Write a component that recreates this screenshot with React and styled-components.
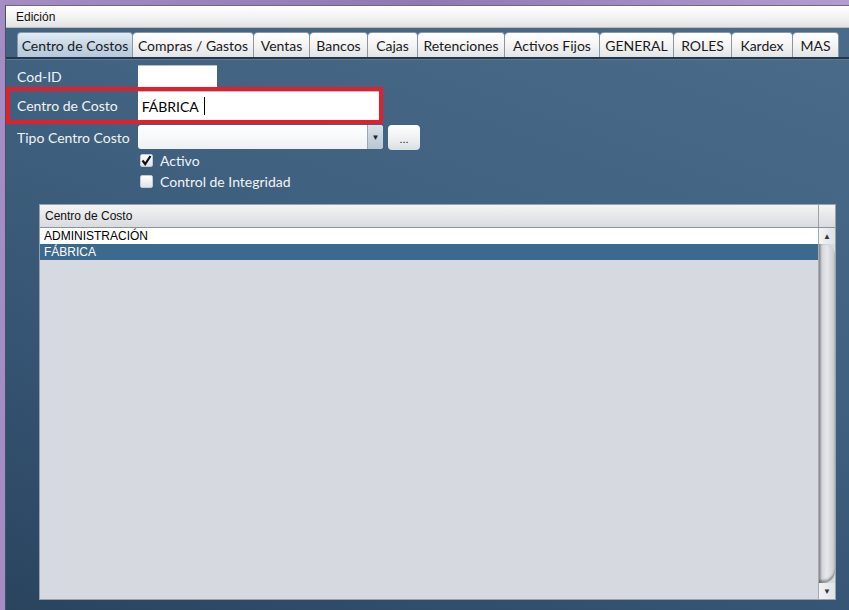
import React from 'react'
import styled, { createGlobalStyle } from 'styled-components'

const GlobalStyle = createGlobalStyle`
  html, body {
    margin: 0;
    padding: 0;
    background: #9c86bc;
    overflow: hidden;
  }
  * { box-sizing: border-box; }
`;

const tabs = [
  { label: 'Centro de Costos', w: 116, active: true },
  { label: 'Compras / Gastos', w: 121 },
  { label: 'Ventas', w: 56 },
  { label: 'Bancos', w: 58 },
  { label: 'Cajas', w: 50 },
  { label: 'Retenciones', w: 87 },
  { label: 'Activos Fijos', w: 95 },
  { label: 'GENERAL', w: 74 },
  { label: 'ROLES', w: 58 },
  { label: 'Kardex', w: 61 },
  { label: 'MAS', w: 46 },
];

const rows = [
  { name: 'ADMINISTRACIÓN' },
  { name: 'FÁBRICA', selected: true },
];

const uiFont = `"Lato", "DejaVu Sans", sans-serif`;

const Window = styled.div`
  width: 849px;
  height: 610px;
  padding: 5px 0 0 5px;
  background: linear-gradient(90deg, #a48cc4 0%, #8f78b4 50%, #b19dd0 100%);
  display: flex;
  flex-direction: column;
`;

const Frame = styled.div`
  flex: 1;
  display: flex;
  flex-direction: column;
  border-left: 1px solid #4b4f63;
  border-top: 1px solid #6d6887;
  overflow: hidden;
`;

const MenuBar = styled.div`
  height: 22px;
  background: linear-gradient(#ffffff, #f1f1f1 60%, #e2e2e2);
  border-bottom: 1px solid #b8bcc4;
  display: flex;
  align-items: center;
  padding-left: 10px;
  font-family: "Liberation Sans", Arial, sans-serif;
  font-size: 12px;
  color: #111;
`;

const Panel = styled.div`
  flex: 1;
  display: flex;
  flex-direction: column;
  background: linear-gradient(200deg, #4a6b8a 0%, #40617f 40%, #355473 70%, #2a445e 100%);
`;

const TabStrip = styled.div`
  height: 31px;
  display: flex;
  align-items: flex-end;
  padding-left: 11px;
  border-bottom: 2px solid #23384c;
  box-shadow: 0 1px 0 #5d7a94;
`;

const Tab = styled.div`
  width: ${p => p.$w}px;
  height: 25px;
  display: flex;
  align-items: center;
  justify-content: center;
  font-family: ${uiFont};
  font-size: 14px;
  color: #1a1a1a;
  white-space: nowrap;
  border: 1px solid #8a97a3;
  border-bottom: none;
  border-left: ${p => (p.$first ? '1px solid #8a97a3' : 'none')};
  border-radius: 4px 4px 0 0;
  background: ${p =>
    p.$active
      ? 'linear-gradient(#e3ecf4, #c4d5e4 55%, #b4c9dc)'
      : 'linear-gradient(#ffffff, #f4f4f4 50%, #e3e4e6)'};
`;

const Form = styled.div`
  padding: 5px 0 0 0;
  display: flex;
  flex-direction: column;
`;

const Row = styled.div`
  display: flex;
  align-items: center;
  height: ${p => p.$h || 23}px;
  padding-left: 11px;
`;

const Highlight = styled.div`
  display: flex;
  align-items: center;
  width: 377px;
  height: 37px;
  margin-top: -1px;
  border: 4px solid #e2202c;
  padding-left: 7px;
`;

const Label = styled.span`
  width: 121px;
  font-family: ${uiFont};
  font-size: 14px;
  color: #f1f4f7;
`;

const TextBox = styled.div`
  width: ${p => p.$w}px;
  height: ${p => p.$h || 23}px;
  background: #fff;
  border-top: 1px solid #b9c2cc;
  display: flex;
  align-items: center;
  padding-left: 4px;
  font-family: ${uiFont};
  font-size: 14px;
  color: #000;
`;

const Caret = styled.span`
  display: inline-block;
  width: 1px;
  height: 18px;
  background: #000;
  margin-left: 5px;
`;

const Combo = styled.div`
  width: 245px;
  height: 24px;
  display: flex;
  border-radius: 3px;
  overflow: hidden;
  background: linear-gradient(#ffffff, #eef1f4);
`;

const ComboField = styled.div`
  flex: 1;
`;

const ComboArrow = styled.div`
  width: 16px;
  display: flex;
  align-items: center;
  justify-content: center;
  background: linear-gradient(#d9e2ea, #b8c7d4);
  border-left: 1px solid #9aa8b5;
  font-size: 8px;
  color: #222;
`;

const DotsButton = styled.div`
  width: 32px;
  height: 25px;
  margin-left: 5px;
  border-radius: 4px;
  background: linear-gradient(#ffffff, #eceef0 60%, #dcdfe3);
  display: flex;
  align-items: flex-end;
  justify-content: center;
  padding-bottom: 5px;
  font-family: "Liberation Sans", Arial, sans-serif;
  font-size: 11px;
  color: #111;
  line-height: 1;
`;

const CheckRow = styled.div`
  display: flex;
  align-items: center;
  height: 21px;
  padding-left: 134px;
  font-family: ${uiFont};
  font-size: 14px;
  color: #f1f4f7;
`;

const Box = styled.span`
  width: 13px;
  height: 13px;
  border-radius: 2px;
  background: linear-gradient(#ffffff, #dfe3e8);
  border: 1px solid #c3cad2;
  margin-right: 7px;
  display: flex;
  align-items: center;
  justify-content: center;
`;

const Table = styled.div`
  margin: 12px 0 0 33px;
  width: 797px;
  height: 396px;
  display: flex;
  flex-direction: column;
  border: 1px solid #98a2ac;
  background: #d6d9e0;
  font-family: "Liberation Sans", Arial, sans-serif;
  font-size: 12px;
`;

const Header = styled.div`
  height: 23px;
  display: flex;
  background: linear-gradient(#f4f4f5, #e6e7ea 50%, #dadbdf);
  border-bottom: 1px solid #8d939a;
`;

const HeaderCell = styled.div`
  flex: 1;
  display: flex;
  align-items: center;
  padding-left: 5px;
  color: #111;
`;

const HeaderCorner = styled.div`
  width: 17px;
  border-left: 1px solid #9ba1a8;
`;

const Body = styled.div`
  flex: 1;
  display: flex;
`;

const Rows = styled.div`
  flex: 1;
  display: flex;
  flex-direction: column;
`;

const DataRow = styled.div`
  height: 16px;
  display: flex;
  align-items: center;
  padding-left: 4px;
  background: ${p => (p.$selected ? '#3b6a8e' : '#fff')};
  color: ${p => (p.$selected ? '#fff' : '#000')};
`;

const ScrollBar = styled.div`
  width: 17px;
  display: flex;
  flex-direction: column;
  background: #d6d9e0;
  border-left: 1px solid #a5abb2;
`;

const ScrollBtn = styled.div`
  height: 16px;
  display: flex;
  align-items: center;
  justify-content: center;
  background: linear-gradient(90deg, #f2f3f5, #dfe2e6);
  font-size: 8px;
  color: #333;
`;

const Track = styled.div`
  flex: 1;
  background: linear-gradient(90deg, #c9ccd1, #e6e8eb 50%, #c4c7cc);
  border-top-right-radius: 12px;
  border-bottom-right-radius: 12px;
  box-shadow: inset 2px 0 2px rgba(0, 0, 0, 0.25), inset 0 -3px 2px rgba(0, 0, 0, 0.3);
`;

export default function App() {
  return (
    <>
      <GlobalStyle />
      <Window>
        <Frame>
          <MenuBar>Edición</MenuBar>
          <Panel>
            <TabStrip>
              {tabs.map((t, i) => (
                <Tab key={t.label} $w={t.w} $active={t.active} $first={i === 0}>
                  {t.label}
                </Tab>
              ))}
            </TabStrip>
            <Form>
              <Row $h={24}>
                <Label>Cod-ID</Label>
                <TextBox $w={79} />
              </Row>
              <Highlight>
                <Label>Centro de Costo</Label>
                <TextBox $w={242} $h={29}>
                  FÁBRICA<Caret />
                </TextBox>
              </Highlight>
              <Row $h={26}>
                <Label>Tipo Centro Costo</Label>
                <Combo>
                  <ComboField />
                  <ComboArrow>▼</ComboArrow>
                </Combo>
                <DotsButton>...</DotsButton>
              </Row>
              <CheckRow>
                <Box>
                  <svg width="11" height="11" viewBox="0 0 11 11">
                    <path d="M1.5 5.5 L4.2 9 L9.5 1" fill="none" stroke="#111" strokeWidth="2.2" />
                  </svg>
                </Box>
                Activo
              </CheckRow>
              <CheckRow>
                <Box />
                Control de Integridad
              </CheckRow>
            </Form>
            <Table>
              <Header>
                <HeaderCell>Centro de Costo</HeaderCell>
                <HeaderCorner />
              </Header>
              <Body>
                <Rows>
                  {rows.map(r => (
                    <DataRow key={r.name} $selected={r.selected}>
                      {r.name}
                    </DataRow>
                  ))}
                </Rows>
                <ScrollBar>
                  <ScrollBtn>▲</ScrollBtn>
                  <Track />
                  <ScrollBtn>▼</ScrollBtn>
                </ScrollBar>
              </Body>
            </Table>
          </Panel>
        </Frame>
      </Window>
    </>
  )
}
